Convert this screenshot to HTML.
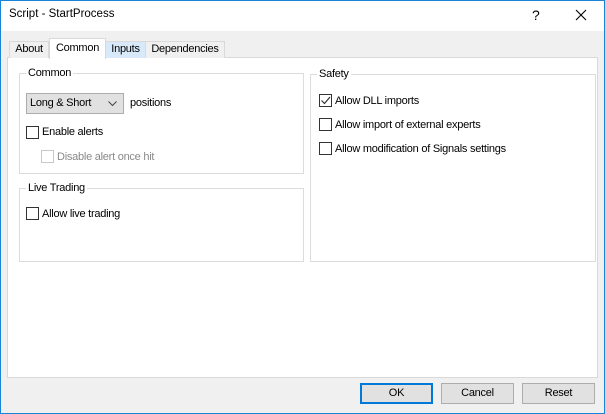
<!DOCTYPE html>
<html><head><style>
*{box-sizing:border-box;margin:0;padding:0}
body{width:605px;height:414px;overflow:hidden;background:#f0f0f0;font-family:"Liberation Sans",sans-serif;font-size:11px;letter-spacing:-0.25px;color:#000;position:relative}
.a{position:absolute;white-space:nowrap}
.win{position:absolute;left:0;top:0;width:605px;height:414px;border:1px solid #1883d7}
.title{left:1px;top:1px;width:603px;height:30px;background:#fff}
.tab{position:absolute;top:41px;height:17px;border:1px solid #d9d9d9;border-bottom:none;background:#f0f0f0;text-align:center;line-height:15px}
.grp{position:absolute;border:1px solid #dcdcdc}
.leg{position:absolute;top:-8px;left:6px;background:#fff;padding:0 2px;line-height:14px}
.cb{position:absolute;width:13px;height:13px;border:1px solid #333;background:#fff}
.btn{position:absolute;top:383px;width:73px;height:21px;border:1px solid #adadad;background:#e1e1e1;text-align:center;line-height:19px}
.t{line-height:14px}
</style></head><body>
<div class="win"></div>
<div class="a title"></div>
<div class="a" style="left:9px;top:8px;font-size:11.5px;letter-spacing:0">Script - StartProcess</div>
<div class="a" style="left:532px;top:7px;font-size:14px">?</div>
<svg class="a" style="left:575px;top:9px" width="12" height="12"><path d="M1 1L11 11M11 1L1 11" stroke="#000" stroke-width="1.1"/></svg>
<div class="a" style="left:7px;top:57px;width:591px;height:321px;background:#fff;border:1px solid #d9d9d9"></div>
<div class="tab" style="left:9px;width:40px">About</div>
<div class="tab" style="left:105px;width:41px;background:#d8eaf9">Inputs</div>
<div class="tab" style="left:145px;width:80px">Dependencies</div>
<div class="tab" style="left:49px;top:38px;width:57px;height:21px;background:#fff;line-height:18px">Common</div>
<div class="grp" style="left:19px;top:73px;width:285px;height:101px"><div class="leg">Common</div></div>
<div class="a" style="left:26px;top:93px;width:98px;height:21px;background:#e1e1e1;border:1px solid #adadad;padding-left:3px;line-height:19px">Long &amp; Short</div>
<svg class="a" style="left:108px;top:101px" width="9" height="6"><path d="M0.5 0.5L4.5 4.5L8.5 0.5" stroke="#444" fill="none"/></svg>
<div class="a t" style="left:130px;top:96px">positions</div>
<div class="cb" style="left:26px;top:126px"></div>
<div class="a t" style="left:42px;top:125px">Enable alerts</div>
<div class="cb" style="left:41px;top:150px;border-color:#c8c8c8"></div>
<div class="a t" style="left:57px;top:150px;color:#8a8a8a">Disable alert once hit</div>
<div class="grp" style="left:19px;top:188px;width:285px;height:74px"><div class="leg">Live Trading</div></div>
<div class="cb" style="left:26px;top:207px"></div>
<div class="a t" style="left:42px;top:207px">Allow live trading</div>
<div class="grp" style="left:310px;top:74px;width:286px;height:188px"><div class="leg">Safety</div></div>
<div class="cb" style="left:319px;top:94px"></div>
<svg class="a" style="left:320px;top:95px" width="11" height="11"><path d="M1.5 5.5L4.5 8.5L10 2" stroke="#333" stroke-width="1.2" fill="none"/></svg>
<div class="a t" style="left:335px;top:94px">Allow DLL imports</div>
<div class="cb" style="left:319px;top:118px"></div>
<div class="a t" style="left:335px;top:118px">Allow import of external experts</div>
<div class="cb" style="left:319px;top:142px"></div>
<div class="a t" style="left:335px;top:142px">Allow modification of Signals settings</div>
<div class="btn" style="left:360px;border:2px solid #0078d7;line-height:17px">OK</div>
<div class="btn" style="left:441px">Cancel</div>
<div class="btn" style="left:522px">Reset</div>
</body></html>
